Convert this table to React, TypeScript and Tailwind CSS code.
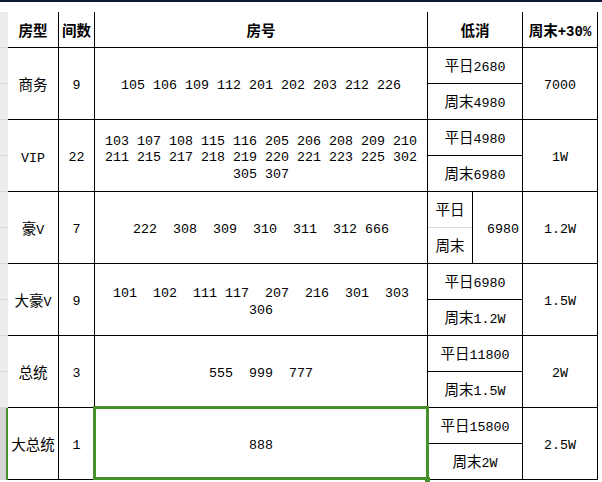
import React from 'react';

const CJK = /([\u3000-\u9fff\uff00-\uffef]+)/;

// split mixed text so chinese runs get the slightly larger size
function T({ s, bold = false }: { s: string; bold?: boolean }) {
  const parts = s.split(CJK).filter(Boolean);
  return (
    <span className={bold ? 'font-bold' : ''}>
      {parts.map((p, i) =>
        CJK.test(p) ? (
          <span key={i} className="text-[14.5px]">{p}</span>
        ) : (
          <span key={i}>{p}</span>
        )
      )}
    </span>
  );
}

type Row = {
  type: string;
  count: string;
  rooms: string[];
  low: [string, string] | 'split';
  weekend: string;
};

const rows: Row[] = [
  { type: '商务', count: '9', rooms: ['105 106 109 112 201 202 203 212 226'], low: ['平日2680', '周末4980'], weekend: '7000' },
  {
    type: 'VIP',
    count: '22',
    rooms: ['103 107 108 115 116 205 206 208 209 210', '211 215 217 218 219 220 221 223 225 302', '305 307'],
    low: ['平日4980', '周末6980'],
    weekend: '1W',
  },
  { type: '豪V', count: '7', rooms: ['222  308  309  310  311  312 666'], low: 'split', weekend: '1.2W' },
  { type: '大豪V', count: '9', rooms: ['101  102  111 117  207  216  301  303', '306'], low: ['平日6980', '周末1.2W'], weekend: '1.5W' },
  { type: '总统', count: '3', rooms: ['555  999  777'], low: ['平日11800', '周末1.5W'], weekend: '2W' },
  { type: '大总统', count: '1', rooms: ['888'], low: ['平日15800', '周末2W'], weekend: '2.5W' },
];

function Cell({ w, children, className = '' }: { w: string; children?: React.ReactNode; className?: string }) {
  return (
    <div className={`${w} shrink-0 h-full pt-[6px] border-r border-b border-black flex flex-col items-center justify-center text-center ${className}`}>
      {children}
    </div>
  );
}

export default function App() {
  return (
    <div
      className="relative w-[602px] h-[482px] bg-white overflow-hidden text-black text-[13.33px] leading-[16.5px]"
      style={{ fontFamily: '"Liberation Mono", "Noto Sans CJK SC", monospace' }}
    >
      <div className="h-[2px] bg-[#0c1838]" />
      <div className="mt-[10px] flex">
        {/* row header strip */}
        <div className="w-[8px] shrink-0 flex flex-col">
          {Array.from({ length: 11 }).map((_, i) => (
            <div key={i} className="h-[36px] bg-[#ececec] border-b border-[#d6d6d6]" />
          ))}
          <div className="h-[72px] bg-[#d4d4d4] border-r-2 border-[#46912b]" />
        </div>

        <div className="flex flex-col">
          {/* header */}
          <div className="flex h-[36px] text-[14px]">
            <Cell w="w-[51px]" className="pt-[5px]"><T s="房型" bold /></Cell>
            <Cell w="w-[36px]" className="pt-[5px]"><T s="间数" bold /></Cell>
            <Cell w="w-[333px]" className="pt-[5px]"><T s="房号" bold /></Cell>
            <Cell w="w-[95px]" className="pt-[5px]"><T s="低消" bold /></Cell>
            <Cell w="w-[75px]" className="pt-[5px] whitespace-nowrap"><T s="周末+30%" bold /></Cell>
          </div>

          {rows.map((r) => (
            <div key={r.type} className="flex h-[72px]">
              <Cell w="w-[51px]" className="pt-[7px] whitespace-nowrap"><T s={r.type} /></Cell>
              <Cell w="w-[36px]">{r.count}</Cell>
              <Cell w="w-[333px]">
                {r.rooms.map((l, i) => (
                  <div key={i} className="whitespace-pre">{l}</div>
                ))}
              </Cell>
              {r.low === 'split' ? (
                <div className="w-[95px] shrink-0 h-full border-r border-b border-black flex">
                  <div className="w-[45px] border-r border-black flex flex-col">
                    <div className="h-[36px] pt-[4px] flex items-center justify-center border-b border-[#dcdcdc]"><T s="平日" /></div>
                    <div className="flex-1 pt-[4px] flex items-center justify-center"><T s="周末" /></div>
                  </div>
                  <div className="flex-1 pt-[6px] flex items-center justify-end pr-[3px]">6980</div>
                </div>
              ) : (
                <div className="w-[95px] shrink-0 h-full border-r border-b border-black flex flex-col">
                  <div className="h-[36px] pt-[5px] flex items-center justify-center border-b border-black whitespace-nowrap"><T s={r.low[0]} /></div>
                  <div className="flex-1 pt-[5px] flex items-center justify-center whitespace-nowrap"><T s={r.low[1]} /></div>
                </div>
              )}
              <Cell w="w-[75px]">{r.weekend}</Cell>
            </div>
          ))}
        </div>
      </div>

      {/* selected cell */}
      <div className="absolute left-[93px] top-[406px] w-[336px] h-[74px] border-[3px] border-[#46912b]" />
      <div className="absolute left-[425px] top-[477px] w-[5px] h-[5px] bg-[#46912b]" />
    </div>
  );
}
